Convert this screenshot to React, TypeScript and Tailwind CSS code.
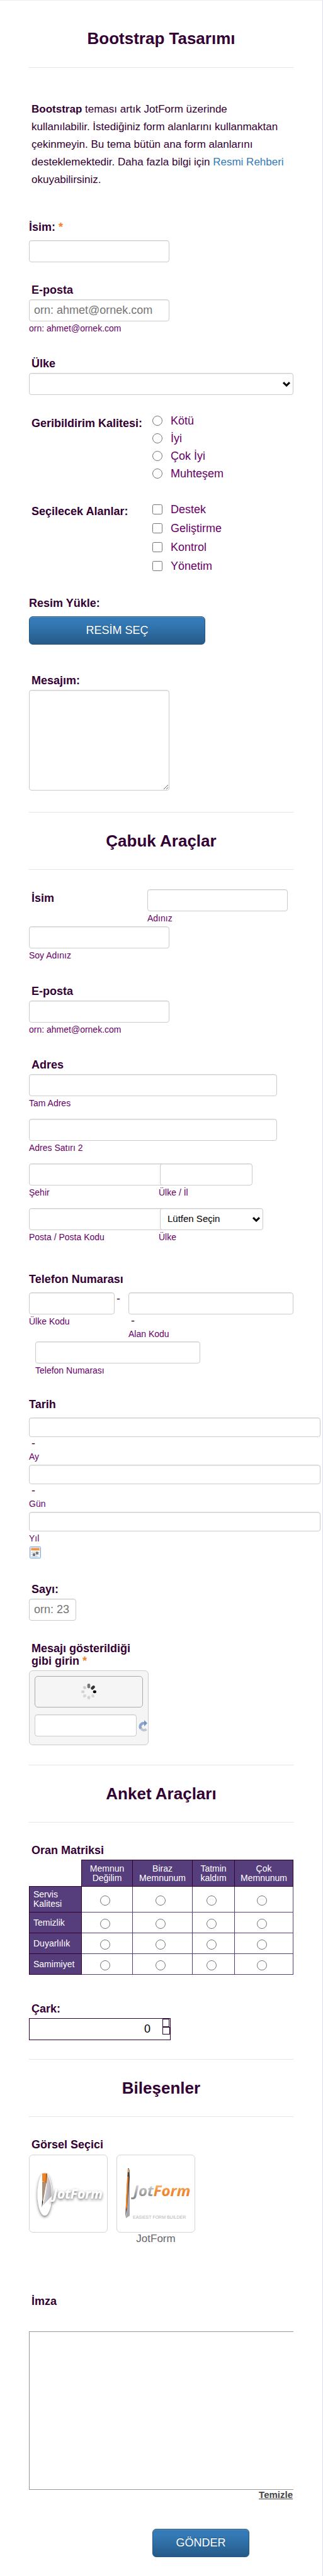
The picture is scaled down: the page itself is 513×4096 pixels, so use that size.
import type { ReactNode } from "react";

const qualities = ["Kötü", "İyi", "Çok İyi", "Muhteşem"];
const areas = ["Destek", "Geliştirme", "Kontrol", "Yönetim"];

const matrixColumns = ["Memnun Değilim", "Biraz Memnunum", "Tatmin kaldım", "Çok Memnunum"];
const matrixRows = ["Servis Kalitesi", "Temizlik", "Duyarlılık", "Samimiyet"];

const inputClass =
  "block h-[35px] rounded-[4px] border border-[#ccc] bg-white px-[7px] text-[18px] text-[#555] shadow-[inset_0_1px_1px_rgba(0,0,0,0.08)] placeholder:text-[#757575]";
const labelClass = "block text-[18px] leading-[20px] font-bold";
const subLabelClass = "mt-[3px] block text-[14px] leading-[16px] text-[#660066]";
const buttonClass =
  "h-[45px] rounded-[6px] border border-[#245580] bg-linear-to-b from-[#337ab7] from-20% to-[#265a88] text-[18px] text-white shadow-[inset_0_1px_0_rgba(255,255,255,0.2)] [text-shadow:0_-1px_0_rgba(0,0,0,0.25)]";

function SectionTitle({ children }: { children: ReactNode }) {
  return (
    <div className="border-y border-[#e5e5e5] py-[30px] text-center">
      <h2 className="text-[26px] leading-[30px] font-bold">{children}</h2>
    </div>
  );
}

function Required() {
  return <span className="text-[#f0832b]">*</span>;
}

function TextField({ id, label, className }: { id: string; label: string; className: string }) {
  return (
    <div>
      <input id={id} type="text" className={`${inputClass} ${className}`} />
      <label htmlFor={id} className={subLabelClass}>
        {label}
      </label>
    </div>
  );
}

function DateField({ id, label, dash }: { id: string; label: string; dash?: boolean }) {
  return (
    <div className="-mr-[43px]">
      <input
        id={id}
        type="text"
        className="block h-[31px] w-full rounded-[4px] border border-[#ccc] bg-white px-[7px] text-[18px] shadow-[inset_0_1px_1px_rgba(0,0,0,0.08)]"
      />
      {dash && <span className="block pl-1 text-[18px] leading-[20px]">-</span>}
      <label htmlFor={id} className={subLabelClass}>
        {label}
      </label>
    </div>
  );
}

function Chevron() {
  return (
    <svg
      className="pointer-events-none absolute top-1/2 right-[5px] -translate-y-1/2"
      width="12"
      height="8"
      viewBox="0 0 12 8"
      fill="none"
      stroke="#000"
      strokeWidth="3"
    >
      <path d="M1 1.2 6 6l5-4.8" />
    </svg>
  );
}

function CalendarIcon() {
  return (
    <svg width="18" height="19" viewBox="0 0 18 19">
      <rect x="0.5" y="0.5" width="17" height="18" rx="1" fill="#dceafa" stroke="#7fa6d6" />
      <rect x="2.5" y="2.5" width="13" height="4" fill="#f7943a" />
      <rect x="2.5" y="6.5" width="13" height="10" fill="#fff" />
      <path
        d="M2.5 9.5h13M2.5 12.5h13M2.5 15.5h13M5.5 7v10M8.5 7v10M11.5 7v10"
        stroke="#b3c8e2"
        strokeWidth="0.8"
      />
      <rect x="5" y="11" width="4" height="4" fill="#777" />
      <rect x="10" y="8.5" width="4" height="4" fill="#777" />
      <path d="M17 11v7h-6z" fill="#e9f1fb" />
    </svg>
  );
}

function Spinner() {
  const petals = ["#777", "#333", "#050505", "#d8d8d8", "#d3d3d3", "#d8d8d8", "#d3d3d3", "#cfcfcf"];
  return (
    <svg width="26" height="26" viewBox="-13 -13 26 26">
      {petals.map((fill, i) => (
        <rect
          key={i}
          x="-2.3"
          y={i < 2 ? -13 : -12}
          width="4.6"
          height={i < 2 ? 7.5 : 5.4}
          rx="2.3"
          fill={fill}
          transform={`rotate(${i * 45})`}
        />
      ))}
    </svg>
  );
}

function RefreshIcon() {
  return (
    <svg width="14" height="18" viewBox="0 0 14 18">
      <path d="M12.500 14.500A5.500 5.500 0 1 1 9 5" fill="none" stroke="#c3c4d2" strokeWidth="4" />
      <path d="M3.500 13.500A5.500 5.500 0 0 1 9 5" fill="none" stroke="#8ba4d0" strokeWidth="4" />
      <path d="M9 0l5 5-5 5z" fill="#7595c6" />
    </svg>
  );
}

function RoundLogo() {
  return (
    <svg width="123" height="122" viewBox="0 0 123 122" aria-hidden="true">
      <defs>
        <filter id="logoShadow" x="-20%" y="-20%" width="140%" height="150%">
          <feDropShadow dx="0" dy="2" stdDeviation="2" floodColor="#3a3038" floodOpacity="0.75" />
        </filter>
        <linearGradient id="fold" x1="0" y1="0" x2="1" y2="0.4">
          <stop offset="0" stopColor="#e8e6e9" />
          <stop offset="1" stopColor="#b5b0b8" />
        </linearGradient>
      </defs>
      <ellipse cx="24" cy="62" rx="11.5" ry="34" fill="#fff" filter="url(#logoShadow)" />
      <path d="M28 31c5 8 7 20 7 34L21 80c4-14 7-30 7-49z" fill="url(#fold)" />
      <path d="M20 42h7l-5 28-2 7z" fill="#a98d76" />
      <path d="M20 29q4-1 8 0l-1 15-7-3z" fill="#f08424" />
      <path d="M26 29l2 .5L27 45l-1.500-2z" fill="#a95d17" />
      <path d="M20 71l1.500 3L19.500 83z" fill="#111" />
      <text
        x="37"
        y="69"
        fill="#fff"
        filter="url(#logoShadow)"
        className="font-['Liberation_Sans_Narrow','Open_Sans',sans-serif] text-[21px] font-bold italic"
      >
        JotForm
      </text>
    </svg>
  );
}

function PencilLogo() {
  return (
    <svg width="123" height="122" viewBox="0 0 123 122" aria-hidden="true">
      <defs>
        <linearGradient id="greyText" x1="0" y1="0" x2="0" y2="1">
          <stop offset="0.2" stopColor="#dcdcdc" />
          <stop offset="0.8" stopColor="#8d8d8d" />
        </linearGradient>
        <linearGradient id="orangeText" x1="0" y1="0" x2="0" y2="1">
          <stop offset="0.2" stopColor="#fcc07a" />
          <stop offset="0.6" stopColor="#f0832b" />
        </linearGradient>
      </defs>
      <path d="M18 22l2 1v73l-6 4z" fill="#a9a5ab" />
      <path d="M17 21h2l1 13-4 48-3 17 1-20z" fill="#4a4344" />
      <path d="M16 34h2l-2 48-2.500 5z" fill="#f08424" />
      <path d="M17 22h2v5h-2z" fill="#f39a45" />
      <text
        x="26"
        y="65"
        className="font-['Liberation_Sans_Narrow','Open_Sans',sans-serif] text-[24px] font-bold italic"
      >
        <tspan fill="url(#greyText)">Jot</tspan>
        <tspan fill="url(#orangeText)">Form</tspan>
      </text>
      <text x="25" y="101" fill="#b5b5b5" className="font-['Liberation_Sans',sans-serif] text-[7px]">
        EASIEST FORM BUILDER
      </text>
    </svg>
  );
}

export default function App() {
  return (
    <main className="w-full overflow-hidden border-t border-r border-t-[#ececf0] border-r-[#dcdcec] bg-white font-['Liberation_Sans',Arial,sans-serif] text-[#330033]">
      <form className="px-[46px] pb-[31px]" onSubmit={(e) => e.preventDefault()}>
        <header className="border-b border-[#e5e5e5] pt-[45px] pb-[31px] text-center">
          <h1 className="text-[26px] leading-[30px] font-bold">Bootstrap Tasarımı</h1>
        </header>

        <p className="mt-[52px] pr-3 pl-1 text-[17px] leading-[28px]">
          <strong>Bootstrap</strong> teması artık JotForm üzerinde kullanılabilir. İstediğiniz form
          alanlarını kullanmaktan çekinmeyin. Bu tema bütün ana form alanlarını desteklemektedir.
          Daha fazla bilgi için{" "}
          <a href="#rehber" className="text-[#337ab7]">
            Resmi Rehberi
          </a>{" "}
          okuyabilirsiniz.
        </p>

        <div className="mt-[51px]">
          <label htmlFor="isim" className={labelClass}>
            İsim: <Required />
          </label>
          <input id="isim" type="text" className={`${inputClass} mt-[11px] w-[223px]`} />
        </div>

        <div className="mt-[34px]">
          <label htmlFor="eposta" className={`${labelClass} pb-[5px] pl-1`}>
            E-posta
          </label>
          <input
            id="eposta"
            type="email"
            placeholder="orn: ahmet@ornek.com"
            className={`${inputClass} w-[223px]`}
          />
          <span className={subLabelClass}>orn: ahmet@ornek.com</span>
        </div>

        <div className="mt-[38px]">
          <label htmlFor="ulke" className={`${labelClass} pb-[5px] pl-1`}>
            Ülke
          </label>
          <div className="relative">
            <select id="ulke" className={`${inputClass} w-full appearance-none`}>
              <option></option>
              <option>Türkiye</option>
            </select>
            <Chevron />
          </div>
        </div>

        <fieldset className="mt-[27px] flex" aria-labelledby="kalite">
          <div id="kalite" className={`${labelClass} w-[196px] pt-2 pl-1 whitespace-nowrap`}>
            Geribildirim Kalitesi:
          </div>
          <div>
            {qualities.map((q) => (
              <label key={q} className="flex h-7 items-center gap-[13px] text-[18px] text-[#660066]">
                <input type="radio" name="kalite" className="size-4" />
                {q}
              </label>
            ))}
          </div>
        </fieldset>

        <fieldset className="mt-[28px] flex" aria-labelledby="alanlar">
          <div id="alanlar" className={`${labelClass} w-[196px] pt-2 pl-1`}>
            Seçilecek Alanlar:
          </div>
          <div>
            {areas.map((a) => (
              <label key={a} className="flex h-[30px] items-center gap-[13px] text-[18px] text-[#660066]">
                <input type="checkbox" className="size-4" />
                {a}
              </label>
            ))}
          </div>
        </fieldset>

        <div className="mt-[34px]">
          <div className={labelClass}>Resim Yükle:</div>
          <button type="button" className={`${buttonClass} mt-[11px] block w-[280px]`}>
            RESİM SEÇ
          </button>
        </div>

        <div className="mt-[47px] mb-[34px]">
          <label htmlFor="mesaj" className={`${labelClass} pb-[5px] pl-1`}>
            Mesajım:
          </label>
          <textarea
            id="mesaj"
            className="block h-[160px] w-[223px] rounded-[4px] border border-[#ccc] p-[7px] text-[18px] shadow-[inset_0_1px_1px_rgba(0,0,0,0.08)]"
          />
        </div>

        <SectionTitle>Çabuk Araçlar</SectionTitle>

        <div className="mt-[31px]">
          <div className="flex">
            <div className={`${labelClass} w-[188px] pt-1 pl-1`}>İsim</div>
            <TextField id="ad" label="Adınız" className="w-[223px]" />
          </div>
          <div className="mt-[5px]">
            <TextField id="soyad" label="Soy Adınız" className="w-[223px]" />
          </div>
        </div>

        <div className="mt-[39px]">
          <label htmlFor="eposta2" className={`${labelClass} pb-[5px] pl-1`}>
            E-posta
          </label>
          <input id="eposta2" type="email" className={`${inputClass} w-[223px]`} />
          <span className={subLabelClass}>orn: ahmet@ornek.com</span>
        </div>

        <div className="mt-[38px]">
          <div className={`${labelClass} pb-[5px] pl-1`}>Adres</div>
          <div className="flex flex-col gap-[17px]">
            <TextField id="adres" label="Tam Adres" className="w-[394px]" />
            <TextField id="adres2" label="Adres Satırı 2" className="w-[394px]" />
            <div className="flex">
              <div className="w-[206px]">
                <TextField id="sehir" label="Şehir" className="w-[222px]" />
              </div>
              <div>
                <input id="il" type="text" className={`${inputClass} relative ml-[2px] w-[147px]`} />
                <label htmlFor="il" className={subLabelClass}>
                  Ülke / İl
                </label>
              </div>
            </div>
            <div className="flex">
              <div className="w-[206px]">
                <TextField id="posta" label="Posta / Posta Kodu" className="w-[222px]" />
              </div>
              <div>
                <div className="relative ml-[2px]">
                  <select
                    id="ulke2"
                    className="block h-[35px] w-[164px] appearance-none rounded-[4px] border border-[#ccc] bg-white px-[11px] text-[15px] text-black shadow-[inset_0_1px_1px_rgba(0,0,0,0.08)]"
                  >
                    <option>Lütfen Seçin</option>
                    <option>Türkiye</option>
                  </select>
                  <Chevron />
                </div>
                <label htmlFor="ulke2" className={subLabelClass}>
                  Ülke
                </label>
              </div>
            </div>
          </div>
        </div>

        <div className="mt-[49px]">
          <div className={labelClass}>Telefon Numarası</div>
          <div className="mt-[11px] flex">
            <TextField id="ulke-kodu" label="Ülke Kodu" className="w-[136px]" />
            <span className="w-[22px] pl-[3px] text-[18px] leading-[20px]">-</span>
            <div className="flex-1">
              <input id="alan-kodu" type="text" className={`${inputClass} w-full`} />
              <span className="block pl-1 text-[18px] leading-[20px]">-</span>
              <label htmlFor="alan-kodu" className={subLabelClass}>
                Alan Kodu
              </label>
            </div>
          </div>
          <div className="mt-1 pl-[10px]">
            <TextField id="telefon" label="Telefon Numarası" className="w-[262px]" />
          </div>
        </div>

        <div className="mt-[36px]">
          <div className={labelClass}>Tarih</div>
          <div className="mt-[11px] flex flex-col gap-[5px]">
            <DateField id="ay" label="Ay" dash />
            <DateField id="gun" label="Gün" dash />
            <DateField id="yil" label="Yıl" />
            <button type="button" aria-label="Takvim" className="w-[20px] pl-px">
              <CalendarIcon />
            </button>
          </div>
        </div>

        <div className="mt-[39px]">
          <label htmlFor="sayi" className={`${labelClass} pb-[5px] pl-1`}>
            Sayı:
          </label>
          <input id="sayi" type="text" placeholder="orn: 23" className={`${inputClass} w-[75px]`} />
        </div>

        <div className="mt-[34px] mb-[31px]">
          <label htmlFor="captcha" className={`${labelClass} w-[180px] pb-[5px] pl-1`}>
            Mesajı gösterildiği gibi girin <Required />
          </label>
          <div className="w-[190px] rounded-[6px] border border-[#ccc] bg-[#f5f5f5] pt-2 pb-[13px] pl-2">
            <div className="flex h-[50px] w-[172px] items-center justify-center rounded-[5px] border border-[#aaa]">
              <Spinner />
            </div>
            <div className="mt-[11px] flex items-center gap-[3px]">
              <input id="captcha" type="text" className={`${inputClass} w-[162px]`} />
              <button type="button" aria-label="Yenile">
                <RefreshIcon />
              </button>
            </div>
          </div>
        </div>

        <SectionTitle>Anket Araçları</SectionTitle>

        <div className="mt-[34px]">
          <div id="matriks" className={`${labelClass} pb-[5px] pl-1`}>
            Oran Matriksi
          </div>
          <table
            aria-labelledby="matriks"
            className="w-full table-fixed border-collapse text-[14px] leading-[15px]"
          >
            <colgroup>
              <col className="w-[83px]" />
              <col className="w-[81px]" />
              <col className="w-[95px]" />
              <col className="w-[67px]" />
              <col />
            </colgroup>
            <thead>
              <tr className="h-[42px]">
                <td></td>
                {matrixColumns.map((c) => (
                  <th
                    key={c}
                    scope="col"
                    className="border border-[#330033] bg-[#563d7c] px-2 font-normal text-white"
                  >
                    {c}
                  </th>
                ))}
              </tr>
            </thead>
            <tbody>
              {matrixRows.map((r) => (
                <tr key={r} className="h-[33px] first:h-[41px]">
                  <th
                    scope="row"
                    className="border border-[#330033] bg-[#563d7c] pl-[6px] text-left font-normal text-white"
                  >
                    {r}
                  </th>
                  {matrixColumns.map((c) => (
                    <td key={c} className="border border-[#563d7c] pt-1 pr-[6px]">
                      <input
                        type="radio"
                        name={r}
                        aria-label={`${r}: ${c}`}
                        className="mx-auto block size-4"
                      />
                    </td>
                  ))}
                </tr>
              ))}
            </tbody>
          </table>
        </div>

        <div className="mt-[44px] mb-[30px]">
          <label htmlFor="cark" className={`${labelClass} pb-[5px] pl-1`}>
            Çark:
          </label>
          <div className="flex h-[35px] w-[225px] border border-[#330033]">
            <input
              id="cark"
              type="text"
              defaultValue="0"
              className="w-[198px] rounded-[4px] pr-[6px] text-right text-[18px] text-black"
            />
            <div className="ml-auto flex w-[12px] flex-col">
              <button type="button" aria-label="Artır" className="h-[13px] w-[11px] border border-[#330033]" />
              <button type="button" aria-label="Azalt" className="h-[12px] w-[12px] border border-[#330033]" />
            </div>
          </div>
        </div>

        <SectionTitle>Bileşenler</SectionTitle>

        <div className="mt-[34px]">
          <div className={`${labelClass} pb-[6px] pl-1`}>Görsel Seçici</div>
          <div className="flex gap-[14px]">
            <button
              type="button"
              aria-label="JotForm"
              className="h-[124px] w-[125px] rounded-[6px] border border-[#d5d5d5]"
            >
              <RoundLogo />
            </button>
            <div>
              <button
                type="button"
                aria-label="JotForm"
                className="block h-[124px] w-[125px] rounded-[6px] border border-[#d5d5d5]"
              >
                <PencilLogo />
              </button>
              <span className="block text-center text-[17px] leading-[20px] text-[#666]">JotForm</span>
            </div>
          </div>
        </div>

        <div className="mt-[79px]">
          <div className={`${labelClass} pl-1`}>İmza</div>
          <div className="mt-[38px] h-[252px] border-y border-l border-[#999]" />
          <div className="flex justify-end pr-px">
            <button type="button" className="text-[15px] leading-[16px] font-bold text-[#444] underline">
              Temizle
            </button>
          </div>
        </div>

        <button type="submit" className={`${buttonClass} mt-[46px] ml-[196px] block w-[154px]`}>
          GÖNDER
        </button>
      </form>
    </main>
  );
}
